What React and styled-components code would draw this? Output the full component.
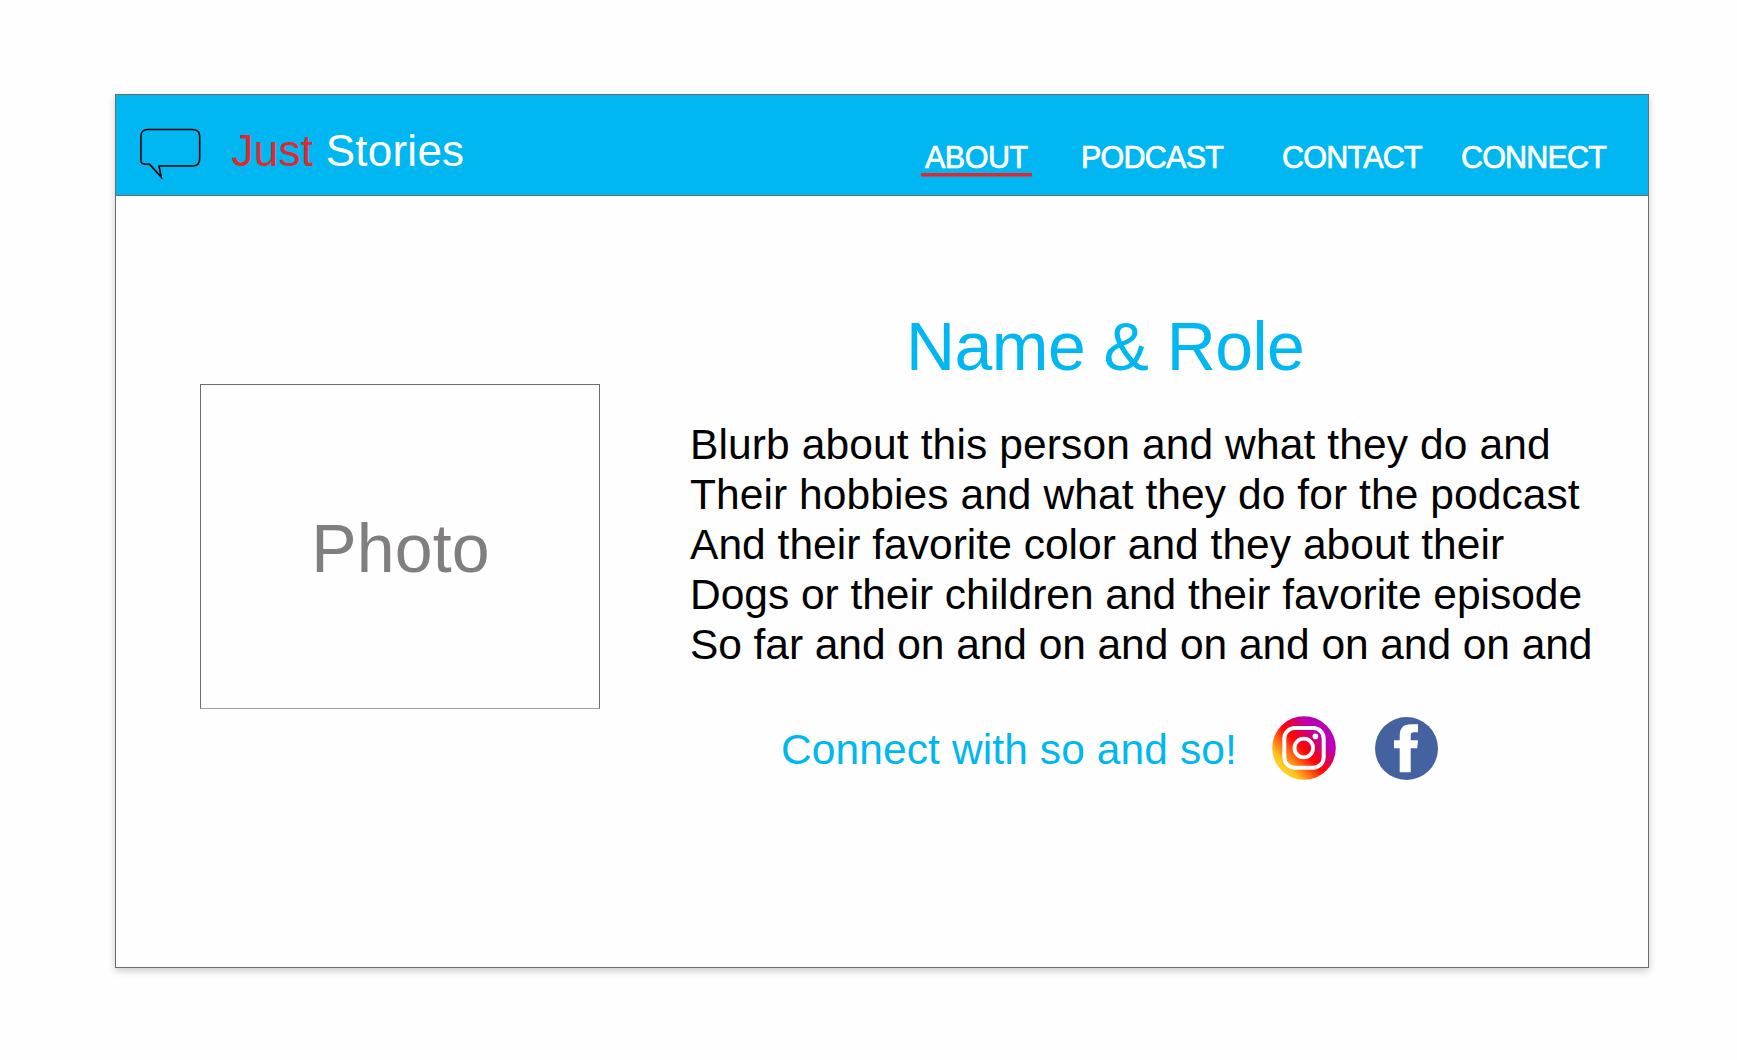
import React from 'react';
import styled, { createGlobalStyle } from 'styled-components';

const Global = createGlobalStyle`
  *, *::before, *::after { box-sizing: border-box; }
  body { margin: 0; background: #fefefe; font-family: "Liberation Sans", Arial, Helvetica, sans-serif; }
  h1, h2, p { margin: 0; font-weight: 400; }
`;

const Page = styled.div`
  height: 1060px;
  padding: 94px 88px 92px 115px;
`;

const Frame = styled.main`
  height: 874px;
  border: 1px solid #6d6d6d;
  background: #fefefe;
  box-shadow: 0 3px 7px rgba(60, 40, 40, 0.24);
`;

const Header = styled.header`
  display: flex;
  justify-content: space-between;
  height: 101px;
  padding: 0 40px 0 24px;
  background: #00b7f1;
  border-bottom: 1px solid #6d6d6d;
`;

const Brand = styled.div`
  display: flex;
  align-items: flex-start;
  gap: 29.5px;
  padding-top: 31px;
`;

const BubbleIcon = styled.svg`
  margin-top: 2px;
`;

const BrandName = styled.h1`
  color: #fff;
  font-size: 44px;
  line-height: 50px;
  letter-spacing: 0.25px;
  white-space: nowrap;
`;

const Accent = styled.span`
  color: #e0282f;
`;

const Nav = styled.nav`
  display: grid;
  grid-template-columns: 156px 201px 179px 151px;
  align-items: start;
  justify-items: start;
  padding-top: 44px;
`;

const NavLink = styled.a`
  width: 111px;
  height: 37px;
  padding: 0 4px;
  color: #fff;
  font-size: 30.5px;
  line-height: 36px;
  letter-spacing: ${(p) => p.$track}px;
  -webkit-text-stroke: 0.7px #fff;
  white-space: nowrap;
  border-bottom: 3px solid ${(p) => (p.$active ? '#e0282f' : 'transparent')};
  box-shadow: ${(p) => (p.$active ? '0 1px 0 #8d5f80' : 'none')};
`;

const Content = styled.section`
  display: flex;
  align-items: flex-start;
  gap: 90px;
  padding-left: 84px;
`;

const Photo = styled.div`
  display: flex;
  align-items: center;
  justify-content: center;
  flex: none;
  width: 400px;
  height: 325px;
  margin-top: 188px;
  padding: 2px 0 0 1px;
  border: 1px solid #6d6d6d;
  border-bottom-color: #a0a0a0;
  color: #807e7f;
  font-size: 68px;
  letter-spacing: 0.15px;
`;

const Bio = styled.article`
  padding-top: 110px;
`;

const Name = styled.h2`
  padding-left: 216px;
  color: #00b7f1;
  font-size: 68px;
  line-height: 80px;
  letter-spacing: -0.55px;
  white-space: nowrap;
`;

const Blurb = styled.p`
  margin-top: 34px;
  color: #000;
  font-size: 42.5px;
  line-height: 50px;
`;

const Line = styled.span`
  display: block;
  white-space: nowrap;
  letter-spacing: ${(p) => p.$track}px;
`;

const Connect = styled.div`
  display: flex;
  align-items: center;
  height: 64px;
  margin-top: 46px;
  padding-left: 91px;
`;

const ConnectText = styled.span`
  width: 491px;
  padding-top: 4px;
  color: #00b7f1;
  font-size: 42.5px;
  line-height: 50px;
  letter-spacing: 0.1px;
  white-space: nowrap;
`;

const Social = styled.a`
  display: flex;
  align-items: flex-end;
  height: 64px;
  margin-right: 39px;
`;

const navItems = [
  { label: 'ABOUT', track: -0.5 },
  { label: 'PODCAST', track: -0.75 },
  { label: 'CONTACT', track: -0.75 },
  { label: 'CONNECT', track: -0.83 },
];

const blurb = [
  { text: 'Blurb about this person and what they do and', track: 0.125 },
  { text: 'Their hobbies and what they do for the podcast', track: 0.08 },
  { text: 'And their favorite color and they about their', track: 0.03 },
  { text: 'Dogs or their children and their favorite episode', track: -0.02 },
  { text: 'So far and on and on and on and on and on and', track: -0.06 },
];

function Bubble() {
  return (
    <BubbleIcon width="62" height="52" viewBox="0 0 62 52" fill="none" stroke="#000" strokeWidth="1.6">
      <path d="M8 1.500H52.500Q59.700 1.500 59.700 8.500V30.500Q59.700 38 52.500 38H19L21.200 49L9.700 36.400Q0.900 36.400 0.900 33.500V8.500Q0.900 1.500 8 1.500Z" />
    </BubbleIcon>
  );
}

function Instagram() {
  return (
    <svg width="64" height="64" viewBox="0 0 64 64" fill="none">
      <defs>
        <linearGradient id="ig" x1="8" y1="54" x2="56" y2="10" gradientUnits="userSpaceOnUse">
          <stop offset="0" stopColor="#ffd426" />
          <stop offset="0.12" stopColor="#ffc41f" />
          <stop offset="0.46" stopColor="#ff0a0a" />
          <stop offset="0.54" stopColor="#f80018" />
          <stop offset="0.8" stopColor="#b900b4" />
        </linearGradient>
      </defs>
      <circle cx="32" cy="32" r="31.800" fill="url(#ig)" />
      <rect x="12.300" y="12" width="39.400" height="39.700" rx="10.500" stroke="#fff" strokeWidth="4" />
      <circle cx="31.800" cy="32" r="9.300" stroke="#fff" strokeWidth="3.800" />
      <circle cx="43.400" cy="20.400" r="2.800" fill="#fff" />
    </svg>
  );
}

function Facebook() {
  return (
    <svg width="63" height="63" viewBox="0 0 63 63">
      <circle cx="31.500" cy="31.500" r="31.500" fill="#4562a0" />
      <path d="M24.700 55.200V31.300H19V23.300H24.700V18.500Q24.700 7.200 36 7.200H43V15.200H39Q35.700 15.200 35.700 18.500V23.300H43L42.200 31.300H35.700V55.200Z" fill="#fff" />
    </svg>
  );
}

export default function App() {
  return (
    <>
      <Global />
      <Page>
        <Frame>
          <Header>
            <Brand>
              <Bubble />
              <BrandName><Accent>Just</Accent> Stories</BrandName>
            </Brand>
            <Nav>
              {navItems.map((item, i) => (
                <NavLink key={item.label} $track={item.track} $active={i === 0}>{item.label}</NavLink>
              ))}
            </Nav>
          </Header>
          <Content>
            <Photo>Photo</Photo>
            <Bio>
              <Name>Name &amp; Role</Name>
              <Blurb>
                {blurb.map((line) => <Line key={line.text} $track={line.track}>{line.text}</Line>)}
              </Blurb>
              <Connect>
                <ConnectText>Connect with so and so!</ConnectText>
                <Social><Instagram /></Social>
                <Social><Facebook /></Social>
              </Connect>
            </Bio>
          </Content>
        </Frame>
      </Page>
    </>
  );
}
